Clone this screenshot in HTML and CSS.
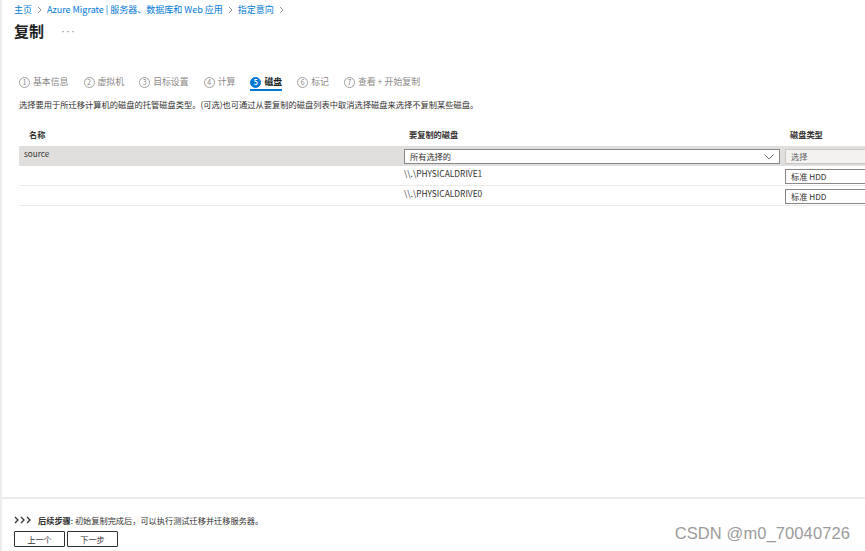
FILE: index.html
```html
<!DOCTYPE html>
<html lang="zh-CN">
<head>
<meta charset="utf-8">
<title>复制</title>
<link rel="stylesheet" href="styles.css">
</head>
<body>
<div class="page">
  <div class="main">
    <nav class="crumbs">
      <a>主页</a>
      <svg class="sep" viewBox="0 0 5 8" width="5" height="8"><path d="M1 1l3 3-3 3" fill="none" stroke="#8a8886" stroke-width="0.9"/></svg>
      <a>Azure Migrate | 服务器、数据库和 Web 应用</a>
      <svg class="sep" viewBox="0 0 5 8" width="5" height="8"><path d="M1 1l3 3-3 3" fill="none" stroke="#8a8886" stroke-width="0.9"/></svg>
      <a>指定意向</a>
      <svg class="sep" viewBox="0 0 5 8" width="5" height="8"><path d="M1 1l3 3-3 3" fill="none" stroke="#8a8886" stroke-width="0.9"/></svg>
    </nav>
    <div class="titlebar">
      <h1>复制</h1>
      <span class="more">···</span>
    </div>

    <div class="content">
      <div class="tabs">
        <div class="tab"><span class="num">1</span>基本信息</div>
        <div class="tab"><span class="num">2</span>虚拟机</div>
        <div class="tab"><span class="num">3</span>目标设置</div>
        <div class="tab"><span class="num">4</span>计算</div>
        <div class="tab active"><span class="num">5</span>磁盘</div>
        <div class="tab"><span class="num">6</span>标记</div>
        <div class="tab"><span class="num">7</span>查看 + 开始复制</div>
      </div>
      <p class="desc">选择要用于所迁移计算机的磁盘的托管磁盘类型。(可选)也可通过从要复制的磁盘列表中取消选择磁盘来选择不复制某些磁盘。</p>

      <div class="grid">
        <div class="row head">
          <div class="c1">名称</div>
          <div class="c2">要复制的磁盘</div>
          <div class="c3">磁盘类型</div>
        </div>
        <div class="row vm">
          <div class="c1">source</div>
          <div class="c2">
            <div class="select wide">所有选择的
              <svg class="chev" viewBox="0 0 10 6" width="10" height="6"><path d="M0.5 0.5l4.5 4.5 4.5-4.5" fill="none" stroke="#605e5c" stroke-width="0.9"/></svg>
            </div>
          </div>
          <div class="c3"><div class="select type disabled">选择</div></div>
        </div>
        <div class="row disk">
          <div class="c1"></div>
          <div class="c2">\\.\PHYSICALDRIVE1</div>
          <div class="c3"><div class="select type">标准 HDD</div></div>
        </div>
        <div class="row disk">
          <div class="c1"></div>
          <div class="c2">\\.\PHYSICALDRIVE0</div>
          <div class="c3"><div class="select type">标准 HDD</div></div>
        </div>
      </div>
    </div>
  </div>

  <footer class="footer">
    <p class="next">
      <svg class="chevs" viewBox="0 0 17 8" width="17" height="8"><path d="M1 1l3 3-3 3M7 1l3 3-3 3M13 1l3 3-3 3" fill="none" stroke="#323130" stroke-width="1.3"/></svg>
      <b>后续步骤</b>: 初始复制完成后，可以执行测试迁移并迁移服务器。
    </p>
    <div class="buttons">
      <button class="btn">上一个</button>
      <button class="btn">下一步</button>
    </div>
  </footer>

  <div class="watermark">CSDN @m0_70040726</div>
</div>
</body>
</html>
```

FILE: styles.css
```css
* { box-sizing: border-box; }
html, body { margin: 0; padding: 0; }
body {
  width: 865px;
  height: 551px;
  overflow: hidden;
  background: #fff;
  font-family: "Noto Sans CJK SC", "Noto Sans", sans-serif;
  color: #323130;
}
.page {
  position: relative;
  height: 551px;
  display: flex;
  flex-direction: column;
  border-left: 2px solid #ececec;
}
.main { flex: 1; overflow: hidden; }

.crumbs {
  display: flex;
  align-items: center;
  gap: 4px;
  padding: 4px 0 0 12px;
  height: 16px;
  font-size: 9px;
  line-height: 12px;
  color: #0078d4;
}
.crumbs a { color: #0078d4; }
.crumbs .sep { margin: 0 1px; }

.titlebar {
  display: flex;
  align-items: center;
  padding-left: 12px;
  margin-top: 5px;
  height: 20px;
}
.titlebar h1 {
  margin: 0;
  font-size: 15px;
  line-height: 20px;
  font-weight: 700;
  color: #201f1e;
}
.more {
  margin-left: 16px;
  font-size: 6px;
  color: #8a8886;
  letter-spacing: -1px;
}

.content { padding-left: 17px; margin-top: 35px; }

.tabs {
  display: flex;
  gap: 15px;
  height: 15px;
}
.tab {
  display: flex;
  align-items: flex-start;
  gap: 3px;
  font-size: 8.9px;
  line-height: 12px;
  color: #8a8886;
  height: 15px;
}
.num {
  width: 11px;
  height: 11px;
  margin-top: 0.5px;
  border: 1px solid #a19f9d;
  border-radius: 50%;
  font-size: 7px;
  line-height: 9px;
  text-align: center;
  color: #8a8886;
}
.tab.active {
  color: #201f1e;
  font-weight: 700;
  border-bottom: 2px solid #0078d4;
}
.tab.active .num {
  background: #0078d4;
  border-color: #0078d4;
  color: #fff;
  font-weight: 700;
}

.desc {
  margin: 7px 0 0;
  font-size: 8.25px;
  line-height: 12px;
  color: #323130;
}

.grid { margin-top: 16px; }
.row {
  display: grid;
  grid-template-columns: 385px 381px 100px;
  width: 866px;
}
.row.head {
  height: 20px;
  font-size: 8.2px;
  font-weight: 700;
  line-height: 12px;
  padding-top: 2px;
}
.row.head .c1 { padding-left: 10px; }
.row.head .c2, .row.head .c3 { padding-left: 5px; }
.row.vm {
  height: 20px;
  background: #e1dfdd;
  font-size: 8.2px;
  line-height: 12px;
}
.row.vm .c1 { padding: 1px 0 0 5px; }
.row.disk {
  height: 20px;
  font-size: 8.4px;
  line-height: 12px;
  border-bottom: 1px solid #edebe9;
}
.row.disk .c2 { padding-top: 1px; }
.row .c2 .select, .row .c3 .select { margin-top: 3px; }

.select {
  position: relative;
  height: 15px;
  border: 1px solid #8a8886;
  background: #fff;
  font-size: 8.2px;
  line-height: 13px;
  padding-left: 5px;
  color: #323130;
}
.select.wide { width: 376px; }
.select.type { width: 90px; }
.select.disabled {
  background: #f3f2f1;
  border-color: #c8c6c4;
  color: #605e5c;
}
.chev {
  position: absolute;
  right: 5px;
  top: 4px;
}

.footer {
  border-top: 2px solid #ececec;
  padding: 15px 0 0 12px;
  height: 54px;
}
.next {
  margin: 0;
  display: flex;
  align-items: center;
  font-size: 8.2px;
  line-height: 12px;
}
.next .chevs { margin-right: 7px; }
.next b { font-weight: 700; }
.buttons {
  display: flex;
  gap: 2px;
  margin-top: 5px;
}
.btn {
  width: 51px;
  height: 16px;
  padding: 0;
  border: 1px solid #323130;
  border-radius: 1px;
  background: #fff;
  font-family: "Noto Sans CJK SC", sans-serif;
  font-size: 8.2px;
  line-height: 13px;
  color: #323130;
}

.watermark {
  position: absolute;
  right: 15px;
  bottom: 8px;
  font-family: "Liberation Sans", Arial, sans-serif;
  font-size: 16.5px;
  color: #9b9b9b;
  letter-spacing: 0.1px;
}
```
